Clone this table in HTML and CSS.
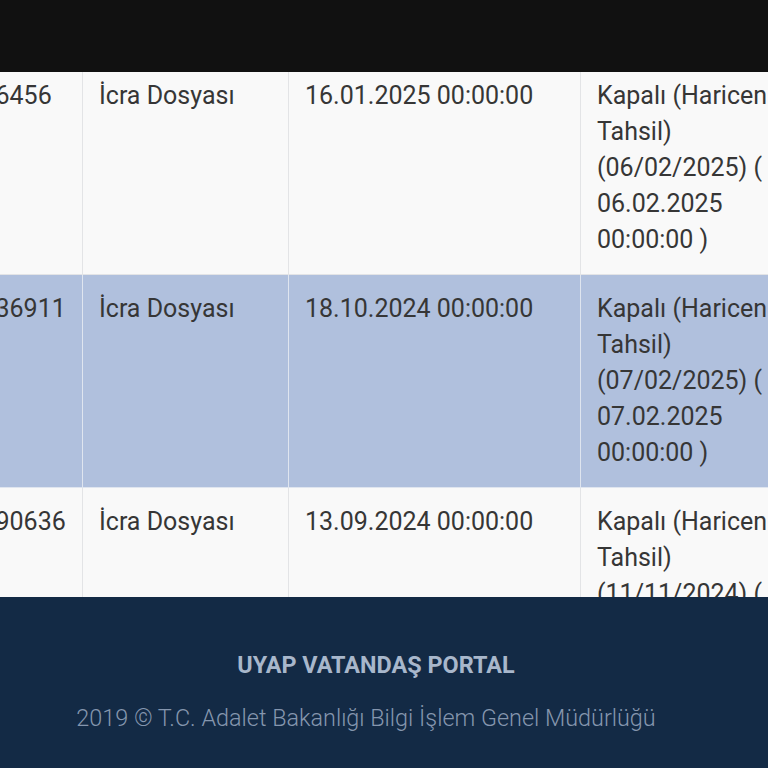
FILE: index.html
```html
<!DOCTYPE html>
<html lang="tr">
<head>
<meta charset="utf-8">
<link rel="stylesheet" href="styles.css">
</head>
<body>
<header class="topbar"></header>
<main class="content">
  <div class="table-wrap">
    <table class="cases">
      <colgroup>
        <col class="c1"><col class="c2"><col class="c3"><col class="c4">
      </colgroup>
      <tbody>
        <tr class="odd">
          <td>2025/6456</td>
          <td>İcra Dosyası</td>
          <td>16.01.2025 00:00:00</td>
          <td>Kapalı (Haricen Tahsil) (06/02/2025) ( 06.02.2025 00:00:00 )</td>
        </tr>
        <tr class="sel">
          <td>2024/36911</td>
          <td>İcra Dosyası</td>
          <td>18.10.2024 00:00:00</td>
          <td>Kapalı (Haricen Tahsil) (07/02/2025) ( 07.02.2025 00:00:00 )</td>
        </tr>
        <tr class="odd">
          <td>2024/90636</td>
          <td>İcra Dosyası</td>
          <td>13.09.2024 00:00:00</td>
          <td>Kapalı (Haricen Tahsil) (11/11/2024) ( 11.11.2024 00:00:00 )</td>
        </tr>
      </tbody>
    </table>
  </div>
</main>
<footer class="footer">
  <div class="footer-title">UYAP VATANDAŞ PORTAL</div>
  <div class="footer-copy">2019 © T.C. Adalet Bakanlığı Bilgi İşlem Genel Müdürlüğü</div>
</footer>
</body>
</html>
```
FILE: styles.css
```css
html, body {
  margin: 0;
  padding: 0;
  height: 768px;
  overflow: hidden;
}
body {
  display: flex;
  flex-direction: column;
  font-family: Roboto, "Liberation Sans", sans-serif;
  color: #363636;
  background: #fff;
}
.topbar {
  height: 72px;
  flex: none;
  background: #111;
}
.content {
  flex: 1;
  overflow: hidden;
  background: #fafafa;
}
.table-wrap {
  margin-top: -11px;
  margin-left: -88px;
}
.cases {
  border-collapse: collapse;
  table-layout: fixed;
  width: 900px;
  font-size: 25px;
  line-height: 36px;
}
.c1 { width: 170px; }
.c2 { width: 206px; }
.c3 { width: 292px; }
.c4 { width: 232px; }
.cases td {
  border: 1px solid #e3e4e6;
  padding: 16px 16px;
  vertical-align: top;
  text-align: left;
}
.cases tr.odd td { background: #f9f9f9; }
.cases tr.sel td {
  background: #b0c0dd;
  border-color: #dfe5ef;
}
.footer {
  height: 171px;
  flex: none;
  background: #132a45;
  text-align: center;
  box-sizing: border-box;
  padding-top: 50px;
}
.footer-title {
  color: #a8b7cb;
  font-weight: 700;
  font-size: 23.4px;
  line-height: 36px;
  padding-right: 16px;
}
.footer-copy {
  margin-top: 17px;
  color: #8596ae;
  font-size: 23.4px;
  font-weight: 300;
  line-height: 36px;
  padding-right: 36px;
}
```
